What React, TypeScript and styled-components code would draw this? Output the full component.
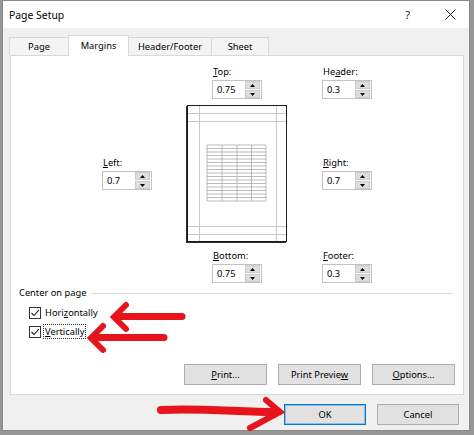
import React from "react";
import styled, { createGlobalStyle } from "styled-components";

const GlobalStyle = createGlobalStyle`
  html, body { margin: 0; padding: 0; background: #969696; }
  body { font-family: "Noto Sans", "Open Sans", sans-serif; color: #000; }
  * { box-sizing: border-box; }
`;

const Screen = styled.div`
  position: relative;
  width: 474px;
  height: 435px;
  background: #969696;
  overflow: hidden;
`;

const Dialog = styled.div`
  margin-left: 2px;
  width: 468px;
  height: 431px;
  border: 1px solid #8a8a8a;
  background: #f0f0f0;
  display: flex;
  flex-direction: column;
`;

const TitleBar = styled.div`
  height: 27px;
  flex: none;
  background: #fff;
  display: flex;
  align-items: center;
  padding: 0 13px 0 6px;
  font-size: 10.4px;
`;

const Title = styled.span`
  flex: 1;
`;

const Help = styled.span`
  font-size: 11px;
  color: #222;
  margin-right: 35px;
`;

const CloseIcon = styled.svg`
  width: 11px;
  height: 11px;
  display: block;
`;

const Body = styled.div`
  padding: 7px 5px 0 7px;
  display: flex;
  flex-direction: column;
`;

const Tabs = styled.div`
  display: flex;
  align-items: flex-end;
  height: 20px;
  margin-left: -1px;
`;

const Tab = styled.div<{ $w: number; $active?: boolean }>`
  width: ${(p) => p.$w}px;
  height: ${(p) => (p.$active ? 21 : 18)}px;
  margin-bottom: ${(p) => (p.$active ? -1 : 0)}px;
  margin-right: -1px;
  position: relative;
  z-index: ${(p) => (p.$active ? 2 : 1)};
  border: 1px solid #d9d9d9;
  border-bottom: none;
  background: ${(p) => (p.$active ? "#fff" : "#f4f4f4")};
  display: flex;
  align-items: center;
  justify-content: center;
  font-size: 9.3px;
  padding-bottom: ${(p) => (p.$active ? 2 : 0)}px;
`;

const Panel = styled.div`
  height: 340px;
  border: 1px solid #d9d9d9;
  background: #fff;
  display: flex;
  flex-direction: column;
  font-size: 9.3px;
`;

const MarginsGrid = styled.div`
  display: grid;
  grid-template-columns: 1fr 100px 1fr;
  column-gap: 35px;
  row-gap: 6px;
  padding-top: 10px;
`;

const Field = styled.div<{ $col: number; $row: number; $end?: boolean; $center?: boolean; $shift?: number; $top?: number }>`
  grid-column: ${(p) => p.$col};
  grid-row: ${(p) => p.$row};
  justify-self: ${(p) => (p.$end ? "end" : "start")};
  align-self: ${(p) => (p.$center ? "center" : "start")};
  margin-left: ${(p) => p.$shift ?? 0}px;
  margin-top: ${(p) => p.$top ?? 0}px;
  display: flex;
  flex-direction: column;
  gap: 2px;
`;

const FieldLabel = styled.span`
  line-height: 12px;
  padding-left: 1px;
  white-space: nowrap;
`;

const Key = styled.span`
  text-decoration: underline;
  text-underline-offset: 1px;
`;

const SpinBox = styled.div`
  width: 50px;
  height: 19px;
  border: 1px solid #c2c2c2;
  background: #fff;
  display: flex;
  align-items: center;
`;

const SpinValue = styled.span`
  flex: 1;
  padding-left: 4px;
  line-height: 17px;
`;

const SpinColumn = styled.div`
  width: 15px;
  height: 17px;
  margin-right: 1px;
  display: flex;
  flex-direction: column;
  gap: 1px;
`;

const SpinButton = styled.div`
  flex: 1;
  background: #dedede;
  border: 1px solid #cacaca;
  display: flex;
  align-items: center;
  justify-content: center;
`;

const Tri = styled.svg`
  width: 5px;
  height: 3px;
  display: block;
`;

const Preview = styled.div`
  grid-column: 2;
  grid-row: 2;
  width: 100px;
  height: 137px;
  border: 1px solid #1c1c1c;
  box-shadow: -1px 1px 0 #2a2a2a;
  background: #fff;
`;

const PreviewArt = styled.svg`
  display: block;
  width: 98px;
  height: 135px;
`;

const Legend = styled.div`
  display: flex;
  align-items: center;
  gap: 5px;
  margin: 4px 10px 0 8px;
  line-height: 12px;
`;

const Rule = styled.div`
  flex: 1;
  height: 1px;
  background: #dcdcdc;
`;

const CheckList = styled.div`
  display: flex;
  flex-direction: column;
  padding-left: 18px;
  margin-top: 4px;
`;

const CheckRow = styled.div`
  display: flex;
  align-items: center;
  height: 19px;
  gap: 3px;
`;

const Box = styled.div`
  width: 12px;
  height: 12px;
  border: 1px solid #333;
  background: #fff;
  display: flex;
  align-items: center;
  justify-content: center;
`;

const CheckText = styled.span<{ $focus?: boolean }>`
  line-height: 13px;
  padding: 0 1px;
  outline: ${(p) => (p.$focus ? "1px dotted #333" : "none")};
`;

const PanelButtons = styled.div`
  margin-top: auto;
  display: flex;
  justify-content: flex-end;
  gap: 11px;
  padding: 0 8px 9px 0;
`;

const Button = styled.div<{ $default?: boolean; $w?: number }>`
  width: ${(p) => p.$w ?? 83}px;
  height: 21px;
  background: #e1e1e1;
  border: 1px solid ${(p) => (p.$default ? "#0078d7" : "#adadad")};
  box-shadow: ${(p) => (p.$default ? "inset 0 0 0 1px rgba(0,120,215,0.35)" : "none")};
  display: flex;
  align-items: center;
  justify-content: center;
  font-size: 9.3px;
`;

const Footer = styled.div`
  display: flex;
  justify-content: flex-end;
  gap: 11px;
  padding: 9px 5px 0 0;
`;

const Annotations = styled.svg`
  position: absolute;
  left: 0;
  top: 0;
  width: 474px;
  height: 435px;
  pointer-events: none;
`;

const Spin: React.FC<{ value: string }> = ({ value }) => (
  <SpinBox>
    <SpinValue>{value}</SpinValue>
    <SpinColumn>
      <SpinButton>
        <Tri viewBox="0 0 5 3">
          <polygon points="0,3 2.5,0 5,3" fill="#000" />
        </Tri>
      </SpinButton>
      <SpinButton>
        <Tri viewBox="0 0 5 3">
          <polygon points="0,0 5,0 2.5,3" fill="#000" />
        </Tri>
      </SpinButton>
    </SpinColumn>
  </SpinBox>
);

const PageArt: React.FC = () => {
  const rows: number[] = [];
  for (let i = 0; i <= 16; i++) rows.push(39 + i * 3.5);
  const cols = [19, 34, 49, 63.5, 78];
  return (
    <PreviewArt viewBox="0 0 98 135">
      <g stroke="#c9c9c9" strokeWidth="1">
        <line x1="11.5" y1="0" x2="11.5" y2="135" />
        <line x1="88.5" y1="0" x2="88.5" y2="135" />
        <line x1="0" y1="7.5" x2="98" y2="7.5" />
        <line x1="0" y1="15.5" x2="98" y2="15.5" />
        <line x1="0" y1="120.5" x2="98" y2="120.5" />
        <line x1="0" y1="128.5" x2="98" y2="128.5" />
      </g>
      <g stroke="#a9a9a9" strokeWidth="0.8">
        {rows.map((y) => (
          <line key={y} x1="19" y1={y} x2="78" y2={y} />
        ))}
        {cols.map((x) => (
          <line key={x} x1={x} y1="39" x2={x} y2="95" />
        ))}
      </g>
    </PreviewArt>
  );
};

const Check: React.FC = () => (
  <Box>
    <svg width="10" height="10" viewBox="0 0 10 10">
      <polyline points="1.5,5 4,7.5 8.8,2.2" fill="none" stroke="#222" strokeWidth="1.1" />
    </svg>
  </Box>
);

export default function App() {
  return (
    <Screen>
      <GlobalStyle />
      <Dialog>
        <TitleBar>
          <Title>Page Setup</Title>
          <Help>?</Help>
          <CloseIcon viewBox="0 0 11 11">
            <path d="M0.5 0.5 L10.5 10.5 M10.5 0.5 L0.5 10.5" stroke="#222" strokeWidth="1" fill="none" />
          </CloseIcon>
        </TitleBar>
        <Body>
          <Tabs>
            <Tab $w={60}>Page</Tab>
            <Tab $w={61} $active>
              Margins
            </Tab>
            <Tab $w={84}>Header/Footer</Tab>
            <Tab $w={58}>Sheet</Tab>
          </Tabs>
          <Panel>
            <MarginsGrid>
              <Field $col={2} $row={1} $shift={25}>
                <FieldLabel>
                  <Key>T</Key>op:
                </FieldLabel>
                <Spin value="0.75" />
              </Field>
              <Field $col={3} $row={1}>
                <FieldLabel>
                  He<Key>a</Key>der:
                </FieldLabel>
                <Spin value="0.3" />
              </Field>
              <Field $col={1} $row={2} $end $center>
                <FieldLabel>
                  <Key>L</Key>eft:
                </FieldLabel>
                <Spin value="0.7" />
              </Field>
              <Preview>
                <PageArt />
              </Preview>
              <Field $col={3} $row={2} $center>
                <FieldLabel>
                  <Key>R</Key>ight:
                </FieldLabel>
                <Spin value="0.7" />
              </Field>
              <Field $col={2} $row={3} $shift={25} $top={2}>
                <FieldLabel>
                  <Key>B</Key>ottom:
                </FieldLabel>
                <Spin value="0.75" />
              </Field>
              <Field $col={3} $row={3} $top={2}>
                <FieldLabel>
                  <Key>F</Key>ooter:
                </FieldLabel>
                <Spin value="0.3" />
              </Field>
            </MarginsGrid>
            <Legend>
              <span>Center on page</span>
              <Rule />
            </Legend>
            <CheckList>
              <CheckRow>
                <Check />
                <CheckText>
                  Hori<Key>z</Key>ontally
                </CheckText>
              </CheckRow>
              <CheckRow>
                <Check />
                <CheckText $focus>
                  <Key>V</Key>ertically
                </CheckText>
              </CheckRow>
            </CheckList>
            <PanelButtons>
              <Button>
                <span>
                  <Key>P</Key>rint...
                </span>
              </Button>
              <Button>
                <span>
                  Print Previe<Key>w</Key>
                </span>
              </Button>
              <Button>
                <span>
                  <Key>O</Key>ptions...
                </span>
              </Button>
            </PanelButtons>
          </Panel>
          <Footer>
            <Button $default $w={82}>
              OK
            </Button>
            <Button $w={82}>Cancel</Button>
          </Footer>
        </Body>
      </Dialog>
      <Annotations viewBox="0 0 474 435">
        <g stroke="#e8141b" fill="none" strokeLinecap="round" strokeLinejoin="miter">
          <line x1="182" y1="316.5" x2="118" y2="316.5" strokeWidth="7" />
          <polyline points="126,305 114,317 126,329" strokeWidth="6" />
          <line x1="164" y1="337.5" x2="96" y2="337.5" strokeWidth="7" />
          <polyline points="103,326 91,338 103,350" strokeWidth="6" />
          <path d="M161 410 C 200 408, 240 412, 276 412" strokeWidth="8" />
          <polyline points="266,400 280,412 250,428" strokeWidth="6" />
        </g>
      </Annotations>
    </Screen>
  );
}
